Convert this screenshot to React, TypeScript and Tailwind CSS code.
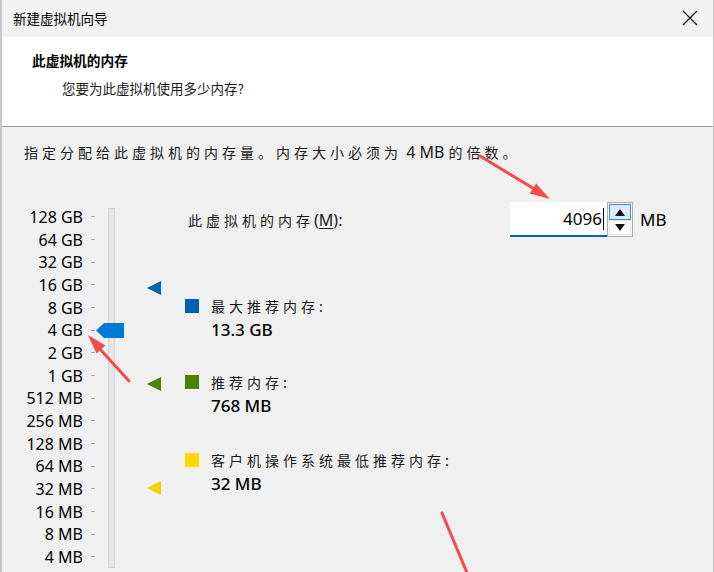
import React from 'react';

const latin = '"Noto Sans", "Noto Sans CJK SC", sans-serif';
const cjk = '"Noto Sans CJK SC", "Noto Sans", sans-serif';

const scale = [
  '128 GB',
  '64 GB',
  '32 GB',
  '16 GB',
  '8 GB',
  '4 GB',
  '2 GB',
  '1 GB',
  '512 MB',
  '256 MB',
  '128 MB',
  '64 MB',
  '32 MB',
  '16 MB',
  '8 MB',
  '4 MB',
];

function LegendItem({
  color,
  label,
  value,
  className,
}: {
  color: string;
  label: string;
  value: string;
  className: string;
}) {
  return (
    <div className={`flex ${className}`}>
      <div className={`w-[14px] h-[14px] mt-[5px] ${color}`} />
      <div className="ml-[12px]">
        <div className="h-[24px] leading-[24px] text-[14px] tracking-[4px] text-[#1a1a1a]" style={{ fontFamily: cjk }}>
          {label}
        </div>
        <div className="h-[24px] leading-[24px] text-[17px] font-medium text-black" style={{ fontFamily: latin }}>
          {value}
        </div>
      </div>
    </div>
  );
}

export default function App() {
  return (
    <div className="relative w-[714px] h-[572px] overflow-hidden bg-[#f0f0f0] border-l-2 border-r border-[#c6c6c6]">
      {/* title bar */}
      <div className="h-[37px] flex items-center justify-between pl-[11px] pr-[15px] bg-[#f3f3f3]">
        <span className="text-[13.5px] text-black" style={{ fontFamily: cjk }}>
          新建虚拟机向导
        </span>
        <svg width="16" height="16" viewBox="0 0 16 16" className="mb-[1px]">
          <path d="M1 1 L15 15 M15 1 L1 15" stroke="#1a1a1a" strokeWidth="1.3" fill="none" />
        </svg>
      </div>

      {/* header */}
      <div className="h-[90px] bg-white border-b border-[#a0a0a0] pt-[13px]" style={{ fontFamily: cjk }}>
        <div className="pl-[30px] h-[20px] leading-[20px] text-[13.7px] font-bold text-black">此虚拟机的内存</div>
        <div className="pl-[60px] mt-[8px] h-[20px] leading-[20px] text-[13.5px] text-[#1a1a1a]">
          您要为此虚拟机使用多少内存?
        </div>
      </div>

      {/* body */}
      <div className="pl-[22px] pt-[15px] h-[20px] leading-[20px] box-content text-[14px] tracking-[4px] text-[#1a1a1a]" style={{ fontFamily: cjk }}>
        指定分配给此虚拟机的内存量。内存大小必须为
        <span className="tracking-normal text-[16px]" style={{ fontFamily: latin }}>
          {' '}4 MB{' '}
        </span>
        的倍数。
      </div>

      <div className="flex mt-[40px]">
        {/* scale labels */}
        <div className="flex flex-col pt-[3.67px]">
          {scale.map((s) => (
            <div key={s} className="flex items-center h-[22.67px]">
              <span className="w-[81px] text-right text-[16px] text-black leading-none" style={{ fontFamily: latin }}>
                {s}
              </span>
              <span className="ml-[8px] w-[4px] h-px bg-[#a8a8a8]" />
            </div>
          ))}
        </div>

        {/* track */}
        <div className="relative ml-[13px] mt-[6px] w-[7px] h-[360px] bg-[#e6e6e6] border border-[#d4d4d4]">
          <svg width="28" height="15" viewBox="0 0 28 15" className="absolute left-[-13px] top-[114px]">
            <polygon points="0,7.5 8,0 28,0 28,15 8,15" fill="#0078d7" />
          </svg>
        </div>

        {/* marker triangles */}
        <div className="relative ml-[32px] w-[14px]">
          <svg width="14" height="14" viewBox="0 0 14 14" className="absolute top-[79px]">
            <polygon points="0,7 14,0 14,14" fill="#0063b1" />
          </svg>
          <svg width="14" height="14" viewBox="0 0 14 14" className="absolute top-[175px]">
            <polygon points="0,7 14,0 14,14" fill="#498205" />
          </svg>
          <svg width="14" height="14" viewBox="0 0 14 14" className="absolute top-[279px]">
            <polygon points="0,7 14,0 14,14" fill="#f2d200" />
          </svg>
        </div>

        {/* right content */}
        <div className="flex flex-col ml-[24px]">
          <div className="flex items-center h-[35px]">
            <span className="ml-[3px] w-[322px] text-[14px] tracking-[4px] text-[#1a1a1a]" style={{ fontFamily: cjk }}>
              此虚拟机的内存
              <span className="tracking-normal text-[16px]" style={{ fontFamily: latin }}>
                (<span className="underline underline-offset-2">M</span>):
              </span>
            </span>
            <div className="flex items-center justify-end w-[97px] h-[35px] bg-white border-b-2 border-[#0067c0] pr-[3px]">
              <span className="text-[17px] text-black leading-none" style={{ fontFamily: latin }}>
                4096
              </span>
              <span className="ml-px w-px h-[22px] bg-black" />
            </div>
            <div className="flex flex-col w-[26px] h-[35px] border border-[#adadad] bg-[#fbfbfb] p-px">
              <div className="flex items-center justify-center h-[16px] bg-[#dcebfa] border border-[#3c8ad6]">
                <svg width="10" height="7" viewBox="0 0 10 7">
                  <polygon points="5,0 10,7 0,7" fill="#111" />
                </svg>
              </div>
              <div className="flex items-center justify-center flex-1 border border-[#e4e4e4] bg-white">
                <svg width="10" height="7" viewBox="0 0 10 7">
                  <polygon points="0,0 10,0 5,7" fill="#111" />
                </svg>
              </div>
            </div>
            <span className="ml-[7px] text-[17px] text-black" style={{ fontFamily: latin }}>
              MB
            </span>
          </div>

          <LegendItem className="mt-[57px]" color="bg-[#0063b1]" label="最大推荐内存:" value="13.3 GB" />
          <LegendItem className="mt-[28px]" color="bg-[#498205]" label="推荐内存:" value="768 MB" />
          <LegendItem className="mt-[30px]" color="bg-[#fcd800]" label="客户机操作系统最低推荐内存:" value="32 MB" />
        </div>
      </div>

      {/* annotation arrows */}
      <svg className="absolute inset-0 pointer-events-none" width="714" height="572" viewBox="0 0 714 572">
        <g stroke="#f24b4b" strokeWidth="3" strokeLinecap="round" fill="#f24b4b">
          <line x1="478" y1="156" x2="534" y2="190" />
          <polygon points="548,199 527.8,193.6 534.1,183.4" stroke="none" />
          <line x1="127" y1="381" x2="97" y2="348" />
          <polygon points="86,335 103.4,345.5 94.5,353.4" stroke="none" />
          <line x1="440" y1="513" x2="468" y2="580" />
        </g>
      </svg>
    </div>
  );
}
